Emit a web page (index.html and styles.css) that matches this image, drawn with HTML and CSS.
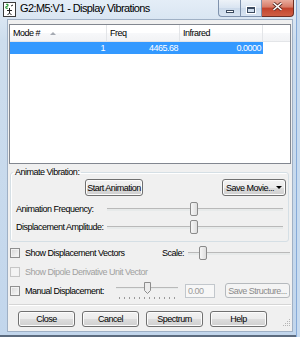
FILE: index.html
```html
<!DOCTYPE html>
<html lang="en">
<head>
    <meta charset="UTF-8">
    <title>G2:M5:V1 - Display Vibrations</title>
    <link rel="stylesheet" href="styles.css">
</head>
<body>
<div class="window">
    <div class="titlebar">
        <svg class="app-icon" width="13" height="15" viewBox="0 0 13 15">
            <rect x="0.5" y="0.5" width="12" height="14" fill="#fff" stroke="#3a3a3a"/>
            <path d="M3 2.5 C5 1.5 6 4 3.5 4.5 C2 5 3 7 5 6" fill="none" stroke="#2e9a3a" stroke-width="1.2"/>
            <path d="M6.5 6 L6.5 11 M4 8.5 L9 8.5 M6.5 11 L4.5 13 M6.5 11 L8.5 13 M8 4 L10 3" fill="none" stroke="#222" stroke-width="1"/>
        </svg>
        <span class="title">G2:M5:V1 - Display Vibrations</span>
        <div class="caption-btns">
            <span class="cap-btn cap-min"><span class="min-glyph"></span></span>
            <span class="cap-btn cap-max"><span class="max-glyph"></span></span>
            <span class="cap-btn cap-close">
                <svg width="11" height="9" viewBox="0 0 11 9">
                    <path d="M1.5 1 L9.5 8 M9.5 1 L1.5 8" stroke="#5a2a22" stroke-width="3.2"/>
                    <path d="M1.5 1 L9.5 8 M9.5 1 L1.5 8" stroke="#fff" stroke-width="1.6"/>
                </svg>
            </span>
        </div>
    </div>

    <div class="client">
        <!-- mode list -->
        <div class="list">
            <div class="list-head">
                <div class="hcell col-mode"><span class="htext">Mode #</span><span class="sort-arrow"></span></div>
                <div class="hcell col-freq">Freq</div>
                <div class="hcell col-ir">Infrared</div>
                <div class="hcell col-rest"></div>
            </div>
            <div class="row selected">
                <div class="cell col-mode">1</div>
                <div class="cell col-freq">4465.68</div>
                <div class="cell col-ir">0.0000</div>
            </div>
        </div>

        <fieldset class="group">
            <legend>Animate Vibration:</legend>
            <div class="anim-buttons">
                <button class="btn start-btn">Start Animation</button>
                <button class="btn movie-btn">Save Movie...<span class="drop-arrow"></span></button>
            </div>
            <div class="slider-row first">
                <span class="slider-label">Animation Frequency:</span>
                <div class="track"><span class="thumb" style="left: 83px"></span></div>
            </div>
            <div class="slider-row">
                <span class="slider-label">Displacement Amplitude:</span>
                <div class="track"><span class="thumb" style="left: 83px"></span></div>
            </div>
        </fieldset>

        <div class="check-row vectors-row">
            <span class="cb"></span>
            <span class="cb-label">Show Displacement Vectors</span>
            <div class="scale">
                <span class="scale-label">Scale:</span>
                <div class="track"><span class="thumb" style="left: 11px"></span></div>
            </div>
        </div>

        <div class="check-row disabled">
            <span class="cb"></span>
            <span class="cb-label">Show Dipole Derivative Unit Vector</span>
        </div>

        <div class="check-row manual-row">
            <span class="cb"></span>
            <span class="cb-label manual-label">Manual Displacement:</span>
            <div class="mslider">
                <span class="mtrack"></span>
                <svg class="mthumb" style="left: 28px" width="7" height="12" viewBox="0 0 7 12">
                    <path d="M0.5 0.5 H6.5 V8.5 L3.5 11.5 L0.5 8.5 Z" fill="#ececec" stroke="#8c8c8c"/>
                </svg>
                <span class="ticks"></span>
            </div>
            <span class="numbox">0.00</span>
            <button class="btn small-btn" disabled>Save Structure...</button>
        </div>

        <div class="separator"></div>

        <div class="dialog-buttons">
            <button class="btn wide">Close</button>
            <button class="btn wide">Cancel</button>
            <button class="btn wide">Spectrum</button>
            <button class="btn wide">Help</button>
            <svg class="grip" width="8" height="8" viewBox="0 0 8 8">
                <g fill="#b5b5b5">
                    <rect x="6" y="0" width="1" height="1"/>
                    <rect x="4" y="2" width="1" height="1"/><rect x="6" y="2" width="1" height="1"/>
                    <rect x="2" y="4" width="1" height="1"/><rect x="4" y="4" width="1" height="1"/><rect x="6" y="4" width="1" height="1"/>
                    <rect x="0" y="6" width="1" height="1"/><rect x="2" y="6" width="1" height="1"/><rect x="4" y="6" width="1" height="1"/><rect x="6" y="6" width="1" height="1"/>
                </g>
            </svg>
        </div>
    </div>
</div>
</body>
</html>
```

FILE: styles.css
```css
/* dialog window */
* {
    box-sizing: border-box;
}

body {
    margin: 0;
    width: 300px;
    height: 337px;
    overflow: hidden;
    font-family: "Liberation Sans", Arial, sans-serif;
    font-size: 9px;
    letter-spacing: -0.5px;
    white-space: nowrap;
    color: #000;
}

.window {
    width: 300px;
    height: 337px;
    display: flex;
    flex-direction: column;
    background: linear-gradient(#e4edf7, #cddded 40px, #c2d6ec);
    box-shadow: inset -3px 0 0 #c8dbef, inset -4px 0 0 #86aad8, inset 0 -2px 0 #5c6b7e;
}

/* title bar */
.titlebar {
    height: 19px;
    display: flex;
    align-items: flex-start;
    flex: none;
}

.app-icon {
    margin: 2px 0 0 3px;
}

.title {
    margin: 2px 0 0 4px;
    font-size: 11px;
    letter-spacing: -0.6px;
    line-height: 13px;
}

.caption-btns {
    margin-left: auto;
    margin-right: 6px;
    display: flex;
    height: 17px;
}

.cap-btn {
    display: flex;
    align-items: center;
    justify-content: center;
    height: 17px;
    border: 1px solid #7f92ad;
    border-top: none;
}

.cap-min {
    width: 22px;
    border-radius: 0 0 0 4px;
    border-right: none;
    background: linear-gradient(#edf2f8, #d9e4f1 50%, #cbd9ea 51%, #d8e4f2);
}

.cap-max {
    width: 22px;
    background: linear-gradient(#edf2f8, #d9e4f1 50%, #cbd9ea 51%, #d8e4f2);
}

.cap-close {
    width: 32px;
    border-left: none;
    border-color: #6e2e25;
    border-radius: 0 0 4px 0;
    background: linear-gradient(#e9ab9c, #d77a66 45%, #c2422c 50%, #cf5f45);
    align-items: flex-start;
    padding-top: 2px;
}

.min-glyph {
    width: 8px;
    height: 3px;
    margin-top: 6px;
    background: #fff;
    border: 1px solid #3c4b60;
}

.max-glyph {
    width: 8px;
    height: 6px;
    margin-top: 3px;
    border: 1px solid #3c4b60;
    border-top-width: 2px;
    box-shadow: 0 0 0 1px #fff;
}

/* client area */
.client {
    margin-left: 7px;
    width: 286px;
    height: 313px;
    flex: none;
    border: 1px solid #9fb0c5;
    background: #f0f0f0;
    padding: 4px 1px 0;
    display: flex;
    flex-direction: column;
}

/* list */
.list {
    height: 140px;
    flex: none;
    border: 1px solid #828790;
    background: #fff;
}

.list-head {
    display: flex;
    height: 17px;
    background: linear-gradient(#fff, #fff 50%, #f7f8fa 51%, #f2f3f5);
    border-bottom: 1px solid #e3e5e8;
}

.hcell {
    display: flex;
    align-items: center;
    padding-left: 3px;
    border-right: 1px solid #e3e5e8;
}

.col-mode {
    width: 97px;
}

.col-freq {
    width: 73px;
}

.col-ir {
    width: 83px;
}

.col-rest {
    flex: 1;
    border-right: none;
}

.htext {
    width: 37px;
}

.sort-arrow {
    width: 0;
    height: 0;
    border-left: 3px solid transparent;
    border-right: 3px solid transparent;
    border-bottom: 3px solid #a5aab2;
}

.row {
    display: flex;
    height: 12px;
    line-height: 12px;
}

.row.selected {
    width: 253px;
    background: #3399ff;
    color: #fff;
}

.cell {
    text-align: right;
    padding-right: 2px;
}

/* group box */
.group {
    margin: 2px 2px 0 1px;
    padding: 0 0 5px;
    border: 1px solid #d5dfe5;
    border-radius: 3px;
    box-shadow: inset 1px 1px 0 #fff;
    min-width: 0;
}

.group legend {
    margin-left: 2px;
    padding: 0 2px;
    line-height: 12px;
}

.anim-buttons {
    display: flex;
    height: 17px;
    margin-top: 1px;
    padding: 0 2px 0 74px;
}

.btn {
    font: inherit;
    letter-spacing: inherit;
    color: #000;
    padding: 0;
    height: 17px;
    border: 1px solid #707070;
    border-radius: 3px;
    background: linear-gradient(#f2f2f2, #ebebeb 50%, #dddddd 51%, #cfcfcf);
    box-shadow: inset 0 0 0 1px #fcfcfc;
    display: flex;
    align-items: center;
    justify-content: center;
}

.start-btn {
    width: 58px;
}

.movie-btn {
    width: 64px;
    margin-left: auto;
    gap: 2px;
}

.drop-arrow {
    width: 0;
    height: 0;
    border-left: 3px solid transparent;
    border-right: 3px solid transparent;
    border-top: 3px solid #000;
}

.slider-row {
    display: flex;
    align-items: center;
    height: 18px;
    padding: 0 5px;
}

.slider-row.first {
    margin-top: 4px;
}

.slider-label {
    width: 91px;
}

.track {
    position: relative;
    flex: 1;
    height: 14px;
}

.track::before {
    content: "";
    position: absolute;
    left: 0;
    right: 0;
    top: 6px;
    height: 2px;
    background: #e7eaea;
    border-top: 1px solid #b9b9b9;
}

.thumb {
    position: absolute;
    top: 0;
    width: 8px;
    height: 14px;
    border: 1px solid #8a8a8a;
    border-radius: 2px;
    background: linear-gradient(to right, #f6f6f6, #dedede);
}

/* checkbox rows */
.check-row {
    display: flex;
    align-items: center;
    height: 18px;
    margin-top: 1px;
    padding-left: 1px;
}

.vectors-row {
    margin-top: 2px;
}

.cb {
    width: 10px;
    height: 10px;
    flex: none;
    border: 1px solid #8f8f8f;
    background: linear-gradient(135deg, #d6d6d6, #fafafa);
    box-shadow: inset 0 0 0 1px #f2f2f2;
}

.cb-label {
    margin-left: 5px;
}

.disabled .cb {
    border-color: #c6c6c6;
    background: #f4f4f4;
}

.disabled .cb-label {
    color: #a0a0a0;
}

.scale {
    margin-left: auto;
    width: 129px;
    display: flex;
    align-items: center;
    padding-right: 1px;
}

.scale-label {
    width: 26px;
}

.manual-row {
    height: 19px;
    margin-top: 0;
}

.manual-label {
    width: 91px;
}

.mslider {
    position: relative;
    width: 62px;
    height: 19px;
}

.mtrack {
    position: absolute;
    left: 0;
    right: 0;
    top: 6px;
    height: 2px;
    background: #e7eaea;
    border-top: 1px solid #b9b9b9;
}

.mthumb {
    position: absolute;
    top: 1px;
}

.ticks {
    position: absolute;
    left: 3px;
    width: 56px;
    top: 16px;
    height: 2px;
    background: repeating-linear-gradient(to right, #9a9a9a 0 1px, transparent 1px 5px);
}

.numbox {
    margin-left: 7px;
    width: 30px;
    height: 14px;
    border: 1px solid #c2c7cc;
    background: #f7f7f7;
    color: #9a9a9a;
    padding-left: 2px;
    line-height: 12px;
}

.small-btn {
    margin-left: 10px;
    width: 65px;
    height: 15px;
    border-color: #b5b9bd;
    background: #f4f4f4;
    box-shadow: none;
    color: #8a8a8a;
}

.separator {
    margin-top: 4px;
    height: 2px;
    border-top: 1px solid #d5d5d5;
    background: #fff;
    flex: none;
}

.dialog-buttons {
    display: flex;
    height: 16px;
    margin-top: 5px;
    padding-left: 9px;
    gap: 7px;
}

.btn.wide {
    height: 16px;
    width: 57px;
}

.grip {
    margin-left: auto;
    align-self: flex-end;
}
```
